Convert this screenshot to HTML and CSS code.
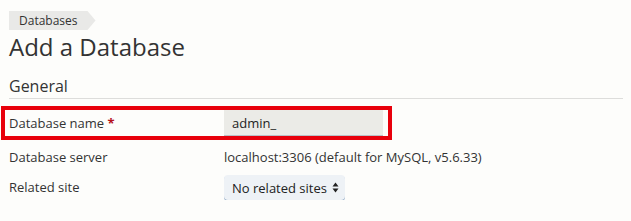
FILE: index.html
```html
<!DOCTYPE html>
<html lang="en">
<head>
    <meta charset="UTF-8">
    <title>Add a Database</title>
    <link rel="stylesheet" href="styles.css">
</head>
<body>
    <div class="page">
        <nav class="breadcrumbs">
            <span class="crumb">Databases</span>
        </nav>
        <h1>Add a Database</h1>
        <h2 class="section-title">General</h2>

        <form class="db-form">
            <div class="form-item highlighted">
                <label class="form-label" for="dbname">Database name <span class="required">*</span></label>
                <input class="text-input" type="text" id="dbname" value="admin_">
            </div>
            <div class="form-item">
                <span class="form-label">Database server</span>
                <span class="form-value">localhost:3306 (default for MySQL, v5.6.33)</span>
            </div>
            <div class="form-item">
                <span class="form-label">Related site</span>
                <div class="select-box">
                    <span>No related sites</span>
                    <svg class="select-arrows" width="7" height="11" viewBox="0 0 7 11">
                        <path d="M3.5 0.5 L6.5 4.5 L0.5 4.5 Z M3.5 10.5 L6.5 6.5 L0.5 6.5 Z" fill="#222"/>
                    </svg>
                </div>
            </div>
        </form>
    </div>
</body>
</html>
```

FILE: styles.css
```css
body {
    margin: 0;
    background: #fdfdfb;
    font-family: "Open Sans", Arial, sans-serif;
    color: #333;
}

.page {
    padding: 8px 8px 0 9px;
}

.breadcrumbs {
    height: 19px;
}

.crumb {
    display: inline-block;
    height: 19px;
    line-height: 19px;
    padding: 0 18px 0 10px;
    font-size: 12px;
    background: #e9e9e7;
    color: #333;
    clip-path: polygon(0 0, calc(100% - 8px) 0, 100% 50%, calc(100% - 8px) 100%, 0 100%);
}

h1 {
    margin: 4px 0 0 0;
    font-size: 24px;
    font-weight: normal;
    line-height: 32px;
}

.section-title {
    margin: 12px 0 0 0;
    padding-bottom: 1px;
    font-size: 16px;
    font-weight: normal;
    line-height: 22px;
    border-bottom: 1px solid #dddddb;
}

.db-form {
    margin-top: 7px;
}

.form-item {
    display: flex;
    align-items: center;
    min-height: 26px;
    margin-top: 4px;
    font-size: 13px;
}

.form-item.highlighted {
    margin: 0 0 0 -8px;
    padding: 0 5px 0 4px;
    width: 374px;
    border: 4px solid #e8000b;
}

.form-label {
    width: 215px;
    flex-shrink: 0;
}

.required {
    color: #b5121b;
    font-weight: bold;
}

.text-input {
    width: 159px;
    height: 26px;
    box-sizing: border-box;
    padding: 0 8px;
    border: none;
    border-bottom: 1px solid #b9c0c6;
    background: #ebebe7;
    font-family: inherit;
    font-size: 13px;
    color: #222;
}

.form-value {
    color: #333;
}

.select-box {
    display: flex;
    align-items: center;
    justify-content: space-between;
    width: 121px;
    height: 25px;
    box-sizing: border-box;
    padding: 0 6px 0 8px;
    margin-top: 1px;
    background: #eef2f6;
    border-radius: 4px;
    box-shadow: 0 1px 0 #8fa8c4;
    color: #222;
}
```
